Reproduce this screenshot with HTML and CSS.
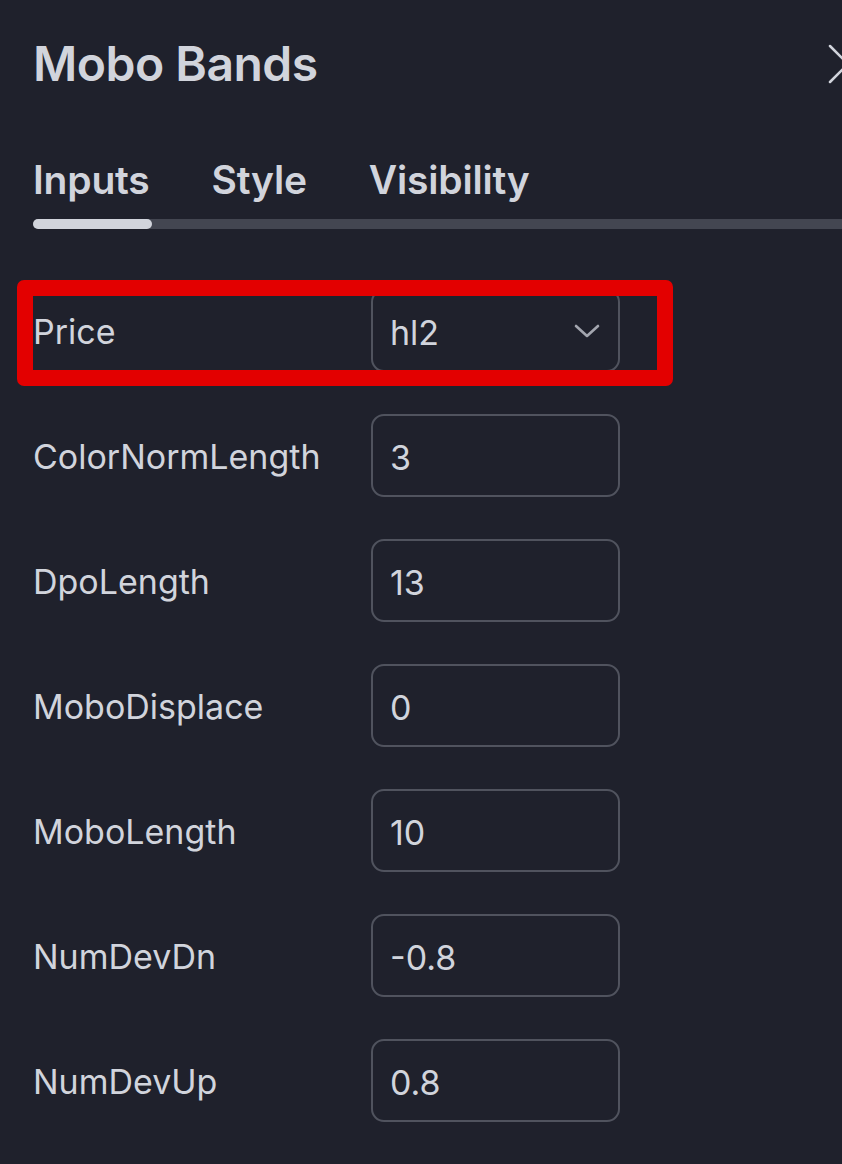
FILE: index.html
```html
<!DOCTYPE html>
<html>
<head>
<meta charset="utf-8">
<link rel="stylesheet" href="styles.css">
</head>
<body>
<div class="panel">
  <div class="header">
    <h1 class="title">Mobo Bands</h1>
    <svg class="close" width="30" height="40" viewBox="0 0 30 40"><path d="M2 2 L20 20 L2 38" fill="none" stroke="#d1d4dc" stroke-width="2.5" stroke-linecap="round"/><path d="M20 20 L38 2 M20 20 L38 38" fill="none" stroke="#d1d4dc" stroke-width="2.5" stroke-linecap="round"/></svg>
  </div>
  <div class="tabs">
    <span class="tab active">Inputs</span>
    <span class="tab">Style</span>
    <span class="tab">Visibility</span>
  </div>
  <div class="track"><div class="indicator"></div></div>
  <div class="rows">
    <div class="row">
      <span class="label">Price</span>
      <div class="field select"><span>hl2</span>
        <svg class="chev" width="26" height="14" viewBox="0 0 26 14"><path d="M2 2 L13 12 L24 2" fill="none" stroke="#a3a6af" stroke-width="2.6" stroke-linecap="round" stroke-linejoin="round"/></svg>
      </div>
    </div>
    <div class="row"><span class="label">ColorNormLength</span><div class="field">3</div></div>
    <div class="row"><span class="label">DpoLength</span><div class="field">13</div></div>
    <div class="row"><span class="label">MoboDisplace</span><div class="field">0</div></div>
    <div class="row"><span class="label">MoboLength</span><div class="field">10</div></div>
    <div class="row"><span class="label">NumDevDn</span><div class="field">-0.8</div></div>
    <div class="row"><span class="label">NumDevUp</span><div class="field">0.8</div></div>
  </div>
  <div class="highlight"></div>
</div>
</body>
</html>
```

FILE: styles.css
```css
html, body {
  margin: 0;
  padding: 0;
  background: #1f212c;
  overflow: hidden;
}
.panel {
  position: relative;
  width: 842px;
  height: 1164px;
  font-family: Inter, "Liberation Sans", sans-serif;
  color: #d1d4dc;
}
.header {
  display: flex;
  justify-content: space-between;
  align-items: center;
  padding: 34px 0 0 33px;
  height: 60px;
}
.title {
  margin: 0;
  font-size: 48px;
  font-weight: 600;
  line-height: 60px;
  letter-spacing: -0.5px;
}
.close {
  margin-right: -16px;
  flex: none;
}
.tabs {
  display: flex;
  gap: 62px;
  padding: 61px 0 0 33px;
  height: 50px;
  align-items: center;
}
.tab {
  font-size: 39px;
  font-weight: 600;
  line-height: 50px;
  letter-spacing: -0.2px;
}
.track {
  margin: 14px 0 0 33px;
  height: 10px;
  background: #434651;
  border-radius: 5px 0 0 5px;
}
.indicator {
  width: 119px;
  height: 10px;
  background: #d1d4dc;
  border-radius: 5px;
}
.rows {
  display: flex;
  flex-direction: column;
  gap: 42px;
  padding: 60px 0 0 33px;
}
.row {
  display: flex;
  align-items: center;
  height: 83px;
}
.label {
  width: 338px;
  font-size: 34px;
  line-height: 40px;
  padding-top: 3px;
}
.field {
  box-sizing: border-box;
  width: 249px;
  height: 83px;
  border: 2px solid #50535e;
  border-radius: 13px;
  padding: 3px 17px 0 17px;
  display: flex;
  align-items: center;
  justify-content: space-between;
  font-size: 34px;
}
.chev {
  margin-top: -3px;
  margin-right: 1px;
}
.highlight {
  position: absolute;
  left: 17px;
  top: 280px;
  width: 656px;
  height: 106px;
  box-sizing: border-box;
  border: 16px solid #e30000;
  border-radius: 7px;
}
```
